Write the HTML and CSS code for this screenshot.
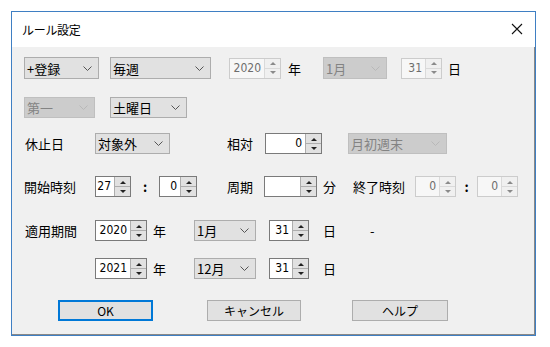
FILE: index.html
```html
<!DOCTYPE html>
<html lang="ja">
<head>
<meta charset="utf-8">
<title>ルール設定</title>
<link rel="stylesheet" href="styles.css">
</head>
<body>
<div class="window">
  <div class="titlebar">
    <span class="title">ルール設定</span>
    <svg class="close" width="12" height="12" viewBox="0 0 12 12"><path d="M1 1L11 11M11 1L1 11" stroke="#111" stroke-width="1.1" fill="none"/></svg>
  </div>
  <div class="content">
    <div class="row r1">
      <div class="combo w75"><span>+登録</span><svg class="chev" width="9" height="5" viewBox="0 0 9 5"><path d="M0.5 0.5L4.5 4.5L8.5 0.5" stroke="#555" fill="none"/></svg></div>
      <div class="combo w101 ml11"><span>毎週</span><svg class="chev" width="9" height="5" viewBox="0 0 9 5"><path d="M0.5 0.5L4.5 4.5L8.5 0.5" stroke="#555" fill="none"/></svg></div>
      <div class="spin dis w52 ml18"><span class="field">2020</span><span class="btns"><i class="up"></i><i class="dn"></i></span></div>
      <span class="lbl ml7">年</span>
      <div class="combo dis w64 ml22"><span>1月</span><svg class="chev" width="9" height="5" viewBox="0 0 9 5"><path d="M0.5 0.5L4.5 4.5L8.5 0.5" stroke="#b8b8b8" fill="none"/></svg></div>
      <div class="spin dis w41 ml14"><span class="field">31</span><span class="btns"><i class="up"></i><i class="dn"></i></span></div>
      <span class="lbl ml6">日</span>
    </div>
    <div class="row r2">
      <div class="combo dis w71"><span>第一</span><svg class="chev" width="9" height="5" viewBox="0 0 9 5"><path d="M0.5 0.5L4.5 4.5L8.5 0.5" stroke="#b8b8b8" fill="none"/></svg></div>
      <div class="combo w77 ml15"><span>土曜日</span><svg class="chev" width="9" height="5" viewBox="0 0 9 5"><path d="M0.5 0.5L4.5 4.5L8.5 0.5" stroke="#555" fill="none"/></svg></div>
    </div>
    <div class="row r3">
      <span class="lbl w71 pl1">休止日</span>
      <div class="combo w75"><span>対象外</span><svg class="chev" width="9" height="5" viewBox="0 0 9 5"><path d="M0.5 0.5L4.5 4.5L8.5 0.5" stroke="#555" fill="none"/></svg></div>
      <span class="lbl w38 ml57">相対</span>
      <div class="spin w57"><span class="field">0</span><span class="btns"><i class="up"></i><i class="dn"></i></span></div>
      <div class="combo dis w99 ml26"><span>月初週末</span><svg class="chev" width="9" height="5" viewBox="0 0 9 5"><path d="M0.5 0.5L4.5 4.5L8.5 0.5" stroke="#b8b8b8" fill="none"/></svg></div>
    </div>
    <div class="row r4">
      <span class="lbl w71">開始時刻</span>
      <div class="spin w36"><span class="field">27</span><span class="btns"><i class="up"></i><i class="dn"></i></span></div>
      <span class="colon w28">:</span>
      <div class="spin w38"><span class="field">0</span><span class="btns"><i class="up"></i><i class="dn"></i></span></div>
      <span class="lbl w37 ml30">周期</span>
      <div class="spin w53"><span class="field"></span><span class="btns"><i class="up"></i><i class="dn"></i></span></div>
      <span class="lbl ml6">分</span>
      <span class="lbl ml17">終了時刻</span>
      <div class="spin dis w41 ml10"><span class="field">0</span><span class="btns"><i class="up"></i><i class="dn"></i></span></div>
      <span class="colon w21">:</span>
      <div class="spin dis w41"><span class="field">0</span><span class="btns"><i class="up"></i><i class="dn"></i></span></div>
    </div>
    <div class="row r5">
      <span class="lbl w71 pl1">適用期間</span>
      <div class="spin w52"><span class="field">2020</span><span class="btns"><i class="up"></i><i class="dn"></i></span></div>
      <span class="lbl ml6">年</span>
      <div class="combo w62 ml28"><span>1月</span><svg class="chev" width="9" height="5" viewBox="0 0 9 5"><path d="M0.5 0.5L4.5 4.5L8.5 0.5" stroke="#555" fill="none"/></svg></div>
      <div class="spin w40 ml13"><span class="field">31</span><span class="btns"><i class="up"></i><i class="dn"></i></span></div>
      <span class="lbl ml14">日</span>
      <span class="lbl ml34">-</span>
    </div>
    <div class="row r6">
      <span class="lbl w71"></span>
      <div class="spin w52"><span class="field">2021</span><span class="btns"><i class="up"></i><i class="dn"></i></span></div>
      <span class="lbl ml6">年</span>
      <div class="combo w62 ml28"><span>12月</span><svg class="chev" width="9" height="5" viewBox="0 0 9 5"><path d="M0.5 0.5L4.5 4.5L8.5 0.5" stroke="#555" fill="none"/></svg></div>
      <div class="spin w40 ml13"><span class="field">31</span><span class="btns"><i class="up"></i><i class="dn"></i></span></div>
      <span class="lbl ml14">日</span>
    </div>
    <div class="row buttons">
      <button class="btn default">OK</button>
      <button class="btn">キャンセル</button>
      <button class="btn">ヘルプ</button>
    </div>
  </div>
</div>
</body>
</html>
```
FILE: styles.css
```css
* { box-sizing: border-box; }
html, body { margin: 0; padding: 0; background: #ffffff; }
body {
  padding: 11px 0 0 11px;
  font-family: "Noto Sans CJK JP", "Noto Sans", sans-serif;
  font-size: 13px;
  color: #000;
}
.window {
  width: 525px;
  height: 325px;
  border: 1px solid #3f7fc3;
  background: #f0f0f0;
  display: flex;
  flex-direction: column;
}
.titlebar {
  height: 35px;
  background: #ffffff;
  display: flex;
  align-items: center;
  justify-content: space-between;
  padding: 0 12px 0 10px;
}
.title { font-size: 12px; letter-spacing: -0.3px; }
.close { display: block; margin-top: -2px; }
.content {
  flex: 1;
  padding: 0 0 0 12px;
  display: flex;
  flex-direction: column;
  border-right: 1px solid #888;
  border-bottom: 1px solid #888;
}
.row {
  display: flex;
  align-items: center;
  height: 21px;
}
.r1 { margin-top: 10px; height: 22px; }
.r2 { margin-top: 18px; }
.r3 { margin-top: 15px; }
.r4 { margin-top: 22px; }
.r5 { margin-top: 23px; }
.r6 { margin-top: 17px; }
.buttons { margin-top: 21px; }

.lbl { white-space: nowrap; line-height: 21px; flex: none; }
.colon { text-align: center; font-weight: bold; flex: none; line-height: 21px; }
.pl1 { padding-left: 1px; }

.combo {
  height: 21px;
  border: 1px solid #adadad;
  background: #e1e1e1;
  display: flex;
  align-items: center;
  justify-content: space-between;
  padding: 0 6px 0 2px;
  flex: none;
}
.r1 .combo { height: 22px; }
.combo.dis {
  background: #cccccc;
  border-color: #bfbfbf;
  color: #838383;
}
.chev { display: block; }

.spin {
  height: 21px;
  border: 1px solid #7a7a7a;
  background: #fff;
  display: flex;
  flex: none;
}
.spin .field {
  flex: 1;
  text-align: right;
  padding-right: 3px;
  line-height: 19px;
  font-family: "DejaVu Sans", sans-serif;
  font-stretch: condensed;
  font-size: 12px;
}
.spin .btns {
  width: 16px;
  display: flex;
  flex-direction: column;
  border-left: 1px solid #adadad;
  background: #e1e1e1;
}
.spin .btns i {
  flex: 1;
  position: relative;
  display: block;
}
.spin .btns i.up { border-bottom: 1px solid #adadad; }
.spin .btns i::after {
  content: "";
  position: absolute;
  left: 50%;
  top: 50%;
  margin-left: -3px;
  border-left: 3px solid transparent;
  border-right: 3px solid transparent;
}
.spin .btns i.up::after { border-bottom: 3px solid #222; margin-top: -1px; }
.spin .btns i.dn::after { border-top: 3px solid #222; margin-top: -2px; }
.spin.dis { border-color: #cccccc; background: #f7f7f7; color: #6d6d6d; }
.spin.dis .btns { background: #f0f0f0; border-left-color: #dadada; }
.spin.dis .btns i.up { border-bottom-color: #dadada; }
.spin.dis .btns i.up::after { border-bottom-color: #8a8a8a; }
.spin.dis .btns i.dn::after { border-top-color: #8a8a8a; }

.btn {
  height: 21px;
  border: 1px solid #adadad;
  background: #e1e1e1;
  font-family: "Noto Sans CJK JP", "Noto Sans", sans-serif;
  font-size: 12px;
  padding: 0;
  color: #000;
  flex: none;
  line-height: 19px;
}
.btn.default { border: 2px solid #0078d7; width: 95px; margin-left: 34px; line-height: 17px; }
.btn:nth-child(2) { width: 94px; margin-left: 54px; }
.btn:nth-child(3) { width: 96px; margin-left: 51px; }

.w21 { width: 21px; } .w28 { width: 28px; } .w36 { width: 36px; } .w37 { width: 37px; }
.w38 { width: 38px; } .w40 { width: 40px; } .w41 { width: 41px; } .w52 { width: 52px; }
.w53 { width: 53px; } .w57 { width: 57px; } .w62 { width: 62px; } .w64 { width: 64px; }
.w71 { width: 71px; } .w75 { width: 75px; } .w77 { width: 77px; } .w99 { width: 99px; }
.w101 { width: 101px; }
.ml6 { margin-left: 6px; } .ml7 { margin-left: 7px; } .ml10 { margin-left: 10px; }
.ml11 { margin-left: 11px; } .ml13 { margin-left: 13px; } .ml14 { margin-left: 14px; }
.ml15 { margin-left: 15px; } .ml17 { margin-left: 17px; } .ml18 { margin-left: 18px; }
.ml22 { margin-left: 22px; } .ml26 { margin-left: 26px; } .ml28 { margin-left: 28px; }
.ml30 { margin-left: 30px; } .ml34 { margin-left: 34px; } .ml57 { margin-left: 57px; }
```
